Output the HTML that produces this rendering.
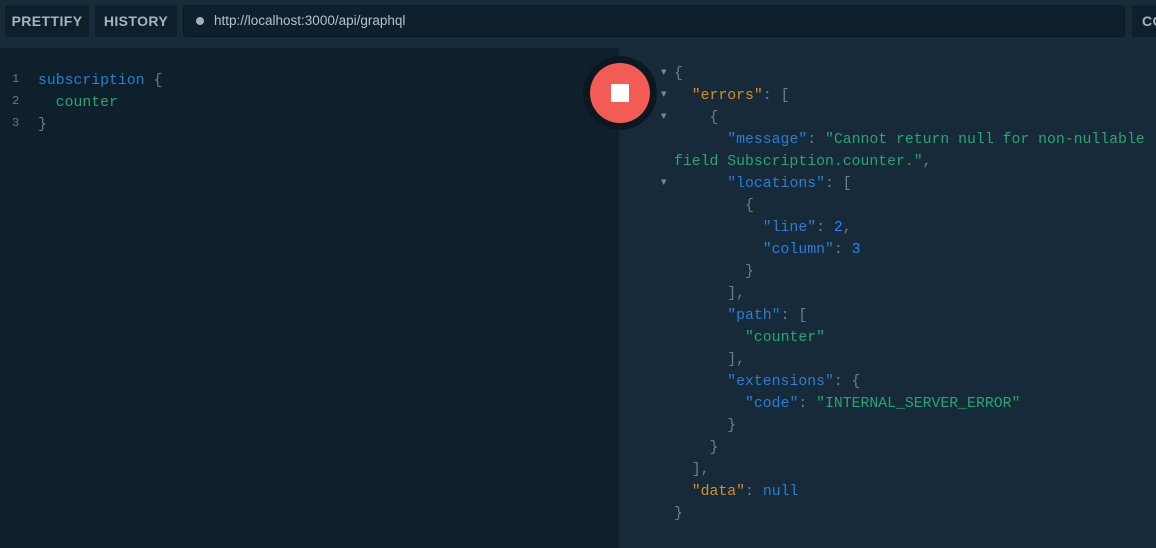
<!DOCTYPE html>
<html><head><style>
*{margin:0;padding:0;box-sizing:border-box}
body{width:1156px;height:548px;overflow:hidden;background:#172a3a;font-family:"Liberation Sans",sans-serif;position:relative}
.top{position:absolute;left:0;top:0;width:1156px;height:48px;background:#172b3a}
.btn{position:absolute;top:5px;height:32px;background:#0f202d;border-radius:2px;color:#aab3ba;font-size:14px;font-weight:bold;line-height:32px;text-align:center;letter-spacing:0.4px}
.url{position:absolute;left:183px;top:5px;width:942px;height:32px;background:#0f202d;border:1px solid #0b1822;border-radius:4px;color:#b8c0c6;font-size:13.5px;line-height:30px;padding-left:30px}
.url:before{content:"";position:absolute;left:12px;top:11px;width:8px;height:8px;border-radius:50%;background:#a8b0b6}
.left{position:absolute;left:0;top:48px;width:619px;height:500px;background:#0f202d}
pre{font-family:"Liberation Mono",monospace;font-size:14.8px;line-height:22px;position:absolute;white-space:pre}
.ln{color:#6b7680;font-size:12px}
.k{color:#2a7ed3}.s{color:#26a671}.p{color:#6f7e8a}.o{color:#d6901c}.n{color:#2882f9}
.stop{position:absolute;left:583px;top:56px;width:74px;height:74px;border-radius:50%;background:#0b1822}
.stop i{position:absolute;left:7px;top:7px;width:60px;height:60px;border-radius:50%;background:#f25c54}
.stop b{position:absolute;left:28px;top:28px;width:18px;height:18px;background:#fff;border-radius:1px}
.ar{position:absolute;left:661px;color:#7d8a95;font-size:7px;font-family:"DejaVu Sans",sans-serif}
</style></head><body>
<div class="top"></div>
<div class="btn" style="left:5px;width:84px">PRETTIFY</div>
<div class="btn" style="left:95px;width:82px">HISTORY</div>
<div class="url">http://localhost:3000/api/graphql</div>
<div class="btn" style="left:1132px;width:40px;text-align:left;padding-left:10px">CO</div>
<div class="left"></div>
<pre class="ln" style="left:12px;top:68px;line-height:22px">1
2
3</pre>
<pre style="left:38px;top:70px"><span class="k">subscription</span> <span class="p">{</span>
  <span class="s">counter</span>
<span class="p">}</span></pre>
<pre style="left:674px;top:63px"><span class="p">{</span>
  <span class="o">"errors"</span><span class="p">: [</span>
    <span class="p">{</span>
      <span class="k">"message"</span><span class="p">:</span> <span class="s">"Cannot return null for non-nullable</span>
<span class="s">field Subscription.counter."</span><span class="p">,</span>
      <span class="k">"locations"</span><span class="p">: [</span>
        <span class="p">{</span>
          <span class="k">"line"</span><span class="p">:</span> <span class="n">2</span><span class="p">,</span>
          <span class="k">"column"</span><span class="p">:</span> <span class="n">3</span>
        <span class="p">}</span>
      <span class="p">],</span>
      <span class="k">"path"</span><span class="p">: [</span>
        <span class="s">"counter"</span>
      <span class="p">],</span>
      <span class="k">"extensions"</span><span class="p">: {</span>
        <span class="k">"code"</span><span class="p">:</span> <span class="s">"INTERNAL_SERVER_ERROR"</span>
      <span class="p">}</span>
    <span class="p">}</span>
  <span class="p">],</span>
  <span class="o">"data"</span><span class="p">:</span> <span class="k">null</span>
<span class="p">}</span></pre>
<div class="ar" style="top:68px">▼</div>
<div class="ar" style="top:90px">▼</div>
<div class="ar" style="top:112px">▼</div>
<div class="ar" style="top:178px">▼</div>
<div class="stop"><i></i><b></b></div>
</body></html>
